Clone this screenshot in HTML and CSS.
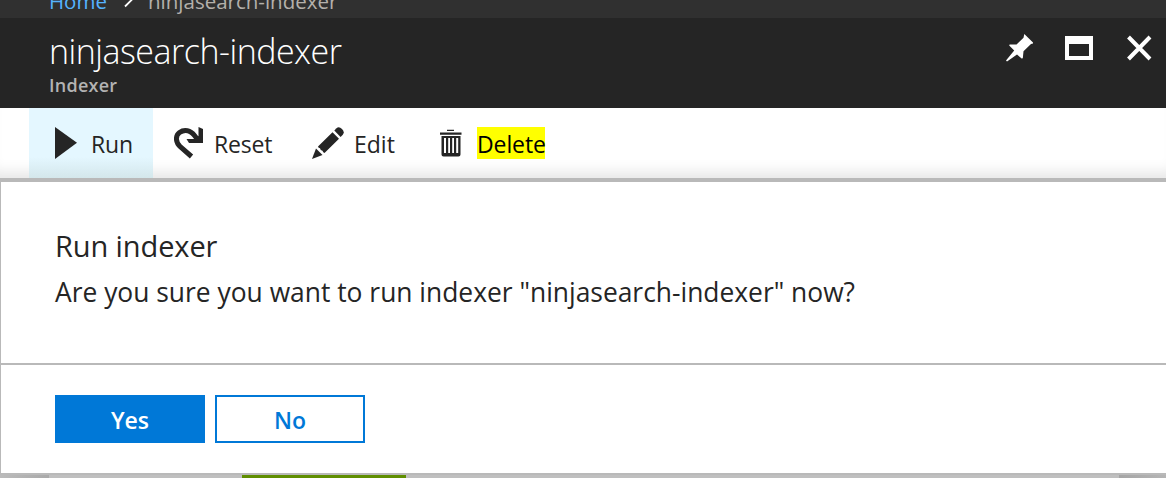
FILE: index.html
```html
<!DOCTYPE html>
<html lang="en">
<head>
<meta charset="utf-8">
<title>ninjasearch-indexer</title>
<link rel="stylesheet" href="styles.css">
</head>
<body>
<div class="blade">
  <nav class="crumbs">
    <a class="crumb-home">Home</a>
    <svg class="crumb-sep" width="12" height="20" viewBox="0 0 12 20"><path d="M2 4l6.500 6-6.500 6.500" fill="none" stroke="#fff" stroke-width="1.800"/></svg>
    <span class="crumb-current">ninjasearch-indexer</span>
  </nav>
  <header class="header">
    <div class="titles">
      <h1 class="title">ninjasearch-indexer</h1>
      <div class="subtitle">Indexer</div>
    </div>
    <div class="controls">
      <svg width="28" height="28" viewBox="0 0 28 28"><path fill="#fff" d="M18.300 0L28 9.400 25 10 17.500 17.300 16.800 24.200 15.600 24.600 11 20.500 1 27.500 0 26.600 8.200 16.500 3.200 11.600 3.600 10.600 10.500 10.500 17.500 3.800z" transform="translate(1 0)"/></svg>
      <svg width="28" height="28" viewBox="0 0 28 28"><path fill="#fff" fill-rule="evenodd" d="M0 2h28v24H0zM4 10v12h20V10z"/></svg>
      <svg width="28" height="28" viewBox="0 0 28 28"><path fill="none" stroke="#fff" stroke-width="4" d="M3.500 3L25 25M25 3L3.500 25"/></svg>
    </div>
  </header>
  <div class="toolbar">
    <div class="cmd cmd-run">
      <svg width="24" height="32" viewBox="0 0 24 32"><path fill="#252525" d="M0 0L22 15.800 0 32z"/></svg>
      <span class="label-run">Run</span>
    </div>
    <div class="cmd cmd-reset">
      <svg width="30" height="32" viewBox="0 0 30 32"><path fill="none" stroke="#252525" stroke-width="5" d="M17.500 29.500L6.500 20C1 15 1.500 8.500 5.500 5.500C10.500 2 16.500 3.500 20.500 8.500L24 13"/><path fill="#252525" d="M24.500 0L29 2V16H15L12.500 12H20L24.500 9z"/></svg>
      <span class="label-reset">Reset</span>
    </div>
    <div class="cmd cmd-edit">
      <svg width="32" height="32" viewBox="0 0 32 32"><g fill="#252525"><path d="M0 32L4 21.500 10.500 28z"/><path d="M6 19.500L20.500 5.200 27 11.700 12.500 26q-1.500-.5-2-2.200-2.200-.3-2.500-2.500-1.700-.4-2-1.800z"/><path d="M22.300 3.500L24.500 1.200Q27-.8 30 2q3 3 .8 5.700L28.600 10z"/></g></svg>
      <span class="label-edit">Edit</span>
    </div>
    <div class="cmd cmd-delete">
      <svg width="22" height="28" viewBox="0 0 22 28"><path fill="#252525" d="M7 .8h7v1.200H7zM0 3.500h21.500v2.300H0z"/><path fill="#252525" fill-rule="evenodd" d="M1.500 7h19v18.500Q20.500 27.500 18.500 27.500h-15Q1.500 27.500 1.500 25.500zM4 9v15h2V9zM8.200 9v15h1.800V9zM12.200 9v15h1.800V9zM16.200 9v15h2V9z"/></svg>
      <span class="label-delete">Delete</span>
    </div>
  </div>
  <section class="dialog">
    <div class="message">
      <h2 class="question-title">Run indexer</h2>
      <p class="question">Are you sure you want to run indexer "ninjasearch-indexer" now?</p>
    </div>
    <div class="actions">
      <button class="btn btn-yes"><span class="label-yes">Yes</span></button>
      <button class="btn btn-no"><span class="label-no">No</span></button>
    </div>
  </section>
  <div class="behind">
    <div class="edge edge-left"></div>
    <div class="chart-bar"></div>
    <div class="edge edge-right"></div>
  </div>
</div>
</body>
</html>
```
FILE: styles.css
```css
* { box-sizing: border-box; }
body { margin: 0; background: #fff; font-family: "Open Sans", "Noto Sans", sans-serif; color: #252525; }
svg { display: block; flex: none; }
h1, h2, p { margin: 0; font-weight: 400; }
.blade { width: 1166px; height: 478px; overflow: hidden; }
.crumbs { display: flex; align-items: flex-end; height: 18px; padding-left: 49px; overflow: hidden; background: #303030; font-size: 20.500px; line-height: 28px; white-space: nowrap; }
.crumb-home { width: 72px; margin-bottom: 3px; color: #55b3ff; }
.crumb-sep { width: 12px; margin: 0 0 8px 2px; }
.crumb-current { margin: 0 0 3px 13px; color: #b4b0ab; }
.header { display: flex; justify-content: space-between; height: 90px; padding: 11px 13px 0 49px; background: #252525; white-space: nowrap; }
.title { height: 44px; line-height: 44px; font-size: 34px; font-weight: 300; letter-spacing: -.5px; color: #fff; }
.subtitle { height: 24px; line-height: 24px; font-size: 18px; font-weight: 600; letter-spacing: .25px; color: #b3b3b3; }
.controls { display: flex; gap: 32px; padding-top: 5px; }
.toolbar { display: flex; height: 70px; padding-left: 29px; background: #fff; font-size: 23px; line-height: 32px; box-shadow: inset 0 -16px 14px -10px rgba(0,0,0,.1); }
.cmd { display: flex; align-items: center; white-space: nowrap; }
.cmd-run { width: 124px; padding-left: 26px; gap: 12px; background: linear-gradient(#e4f7ff 0, #e4f7ff 70%, #d4e7eb 100%); }
.cmd-reset { width: 140px; padding-left: 21px; gap: 10px; }
.label-run, .label-reset { letter-spacing: -.2px; }
.cmd-edit { width: 128px; padding-left: 19px; gap: 10px; }
.cmd-delete { padding-left: 19px; gap: 15px; }
.label-run, .label-reset, .label-edit { padding-top: 2px; }
.label-delete { width: 68px; height: 32px; padding-top: 1px; line-height: 32px; background: #ff0; color: #000; letter-spacing: -.1px; }
.dialog { height: 297px; border: solid #b9b9b9; border-width: 4px 0 2px 1px; background: #fff; }
.message { height: 183px; padding: 44px 0 0 54px; border-bottom: 2px solid #b9b9b9; white-space: nowrap; }
.question-title { height: 41px; line-height: 40px; font-size: 29px; letter-spacing: -.1px; }
.question { height: 50px; line-height: 50px; font-size: 26.400px; }
.actions { display: flex; gap: 10px; padding: 30px 0 0 54px; }
.btn { display: flex; align-items: center; justify-content: center; width: 150px; height: 48px; padding: 2px 0 0; border: 2px solid #0078d7; font: 600 23px "Open Sans", "Noto Sans", sans-serif; }
.btn-yes { background: #0078d7; color: #fff; }
.btn-no { background: #fff; color: #0078d7; }
.behind { display: flex; height: 3px; background: #bfbfbf; }
.edge-left { width: 49px; margin-right: 193px; background: linear-gradient(90deg, #bbb, #a9a9a9); }
.chart-bar { width: 164px; background: #5f8e00; }
.edge-right { width: 47px; margin-left: auto; background: linear-gradient(90deg, #a5a5a5, #b5b5b5); }
```
